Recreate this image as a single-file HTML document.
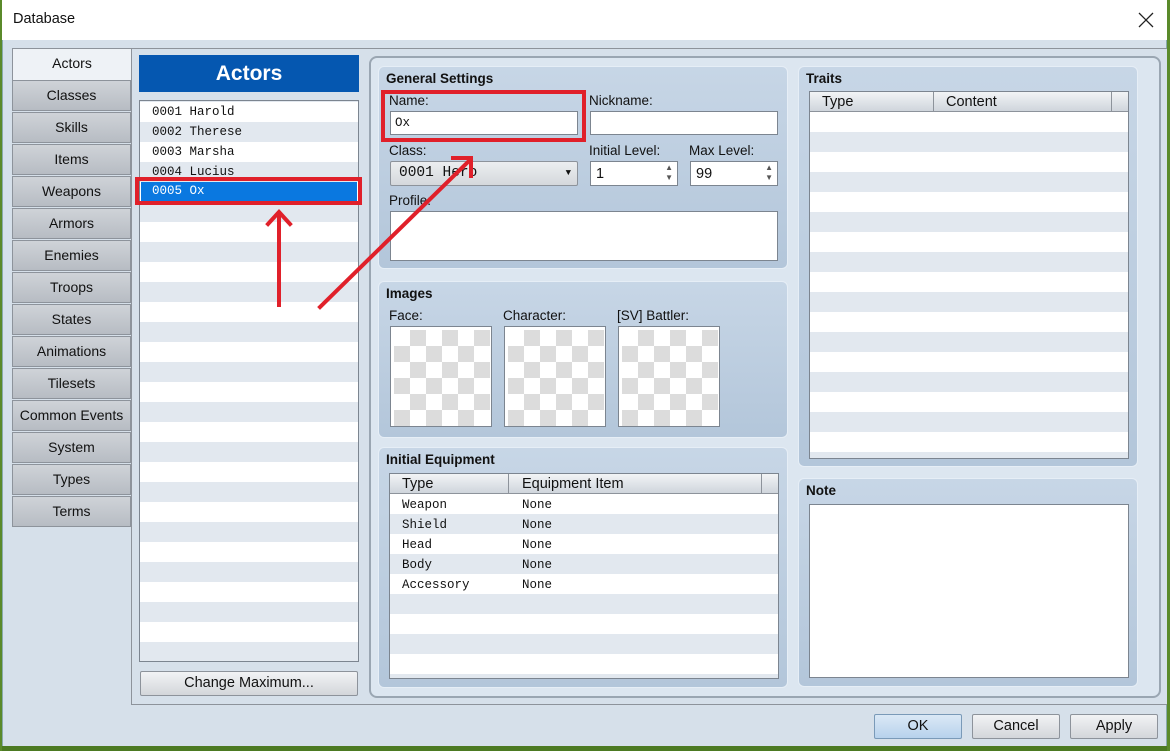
<!DOCTYPE html>
<html><head><meta charset="utf-8"><style>
*{box-sizing:border-box;margin:0;padding:0}
body{width:1170px;height:751px;position:relative;overflow:hidden;background:#5a8a2a;font-family:"Liberation Sans",sans-serif;font-size:13px;color:#111}
.a{position:absolute}
.win{left:2px;top:0;width:1165px;height:748px;background:#d6e0ea;border:1px solid #8aa}
.title{left:2px;top:0;width:1165px;height:40px;background:#fff}
.tab{position:absolute;left:12px;width:119px;height:31px;background:linear-gradient(#cfd3d8,#b7bcc3);border:1px solid #8d939b;text-align:center;line-height:29px;font-size:14px}
.mono{font-family:"Liberation Mono",monospace;font-size:12.5px}
.stripe{background:repeating-linear-gradient(#fff 0 20px,#e2e8ef 20px 40px)}
.panel{position:absolute;border-radius:6px;background:linear-gradient(#c7d6e6,#b3c6da);border:1px solid #e6eef6}
.ph{position:absolute;left:7px;top:4px;font-weight:bold;font-size:13.5px}
.lbl{position:absolute;font-size:13.5px}
.inp{position:absolute;background:#fff;border:1px solid #7c8590}
.chk{position:absolute;width:102px;height:101px;border:1px solid #7c8590;background:#fff;padding:3px}
.chk div{width:96px;height:96px;background:repeating-conic-gradient(#dcdcdc 0 25%,#fff 0 50%) 0 0/32px 32px}
.hdr{position:absolute;height:20px;background:linear-gradient(#f2f4f6,#cfd5dc);border-bottom:1px solid #8d939b;font-size:14.5px;line-height:20px}
.btn{position:absolute;height:25px;border:1px solid #8d939b;border-radius:2px;background:linear-gradient(#f2f3f5,#d3d6da);text-align:center;line-height:23px;font-size:14.5px}
.red{position:absolute;border:4px solid #e0202a}
</style></head><body>
<div class="a win"></div>
<div class="a title"></div>
<div class="a" style="left:13px;top:11px;font-size:14.5px">Database</div>
<svg class="a" style="left:1138px;top:12px" width="16" height="16"><path d="M1 1L15 15M15 1L1 15" stroke="#222" stroke-width="1.3"/></svg>
<div class="a" style="left:2px;top:746px;width:1165px;height:5px;background:#4c7a22"></div>

<div class="tab" style="top:48px;background:#eef2f6;height:33px;border-right:none">Actors</div>
<div class="tab" style="top:80px">Classes</div>
<div class="tab" style="top:112px">Skills</div>
<div class="tab" style="top:144px">Items</div>
<div class="tab" style="top:176px">Weapons</div>
<div class="tab" style="top:208px">Armors</div>
<div class="tab" style="top:240px">Enemies</div>
<div class="tab" style="top:272px">Troops</div>
<div class="tab" style="top:304px">States</div>
<div class="tab" style="top:336px">Animations</div>
<div class="tab" style="top:368px">Tilesets</div>
<div class="tab" style="top:400px">Common Events</div>
<div class="tab" style="top:432px">System</div>
<div class="tab" style="top:464px">Types</div>
<div class="tab" style="top:496px">Terms</div>

<div class="a" style="left:131px;top:48px;width:1036px;height:657px;border:1px solid #8d939b;border-right:none;background:#d6e0ea"></div>

<div class="a" style="left:139px;top:55px;width:220px;height:37px;background:#0557b0;color:#fff;font-weight:bold;font-size:21px;text-align:center;line-height:37px">Actors</div>
<div class="a stripe" style="left:139px;top:100px;width:220px;height:562px;border:1px solid #7c8590;background-position:0 1px"></div>
<div class="a mono" style="left:152px;top:102px;line-height:20px">0001 Harold<br>0002 Therese<br>0003 Marsha<br>0004 Lucius</div>
<div class="a mono" style="left:141px;top:182px;width:216px;height:19px;background:#0a78e0;color:#fff;padding-left:11px;line-height:19px">0005 Ox</div>
<div class="btn" style="left:140px;top:671px;width:218px">Change Maximum...</div>

<div class="a" style="left:369px;top:56px;width:792px;height:642px;border:2px solid #9aa6b2;border-radius:8px;background:#dce6f0"></div>

<div class="panel" style="left:378px;top:66px;width:410px;height:203px"><div class="ph">General Settings</div></div>
<div class="lbl" style="left:389px;top:93px">Name:</div>
<div class="inp mono" style="left:390px;top:111px;width:188px;height:24px;padding:4px 4px">Ox</div>
<div class="lbl" style="left:589px;top:93px">Nickname:</div>
<div class="inp" style="left:590px;top:111px;width:188px;height:24px"></div>
<div class="lbl" style="left:389px;top:143px">Class:</div>
<div class="btn mono" style="left:390px;top:161px;width:188px;text-align:left;padding-left:8px;background:linear-gradient(#eceef0,#d5d8dc)">0001 Hero<span style="position:absolute;right:6px;font-size:9px">▼</span></div>
<div class="lbl" style="left:589px;top:143px">Initial Level:</div>
<div class="inp" style="left:590px;top:161px;width:88px;height:25px;padding:4px 5px;font-size:14.5px">1<span style="position:absolute;right:4px;top:1px;font-size:8px;line-height:10px;color:#555">▲<br>▼</span></div>
<div class="lbl" style="left:689px;top:143px">Max Level:</div>
<div class="inp" style="left:690px;top:161px;width:88px;height:25px;padding:4px 5px;font-size:14.5px">99<span style="position:absolute;right:4px;top:1px;font-size:8px;line-height:10px;color:#555">▲<br>▼</span></div>
<div class="lbl" style="left:389px;top:193px">Profile:</div>
<div class="inp" style="left:390px;top:211px;width:388px;height:50px"></div>

<div class="panel" style="left:378px;top:281px;width:410px;height:157px"><div class="ph">Images</div></div>
<div class="lbl" style="left:389px;top:308px">Face:</div>
<div class="lbl" style="left:503px;top:308px">Character:</div>
<div class="lbl" style="left:617px;top:308px">[SV] Battler:</div>
<div class="chk" style="left:390px;top:326px"><div></div></div>
<div class="chk" style="left:504px;top:326px"><div></div></div>
<div class="chk" style="left:618px;top:326px"><div></div></div>

<div class="panel" style="left:378px;top:447px;width:410px;height:241px"><div class="ph">Initial Equipment</div></div>
<div class="a stripe" style="left:389px;top:473px;width:390px;height:206px;border:1px solid #7c8590;background-position:0 20px"></div>
<div class="hdr" style="left:390px;top:474px;width:388px"><span style="position:absolute;left:12px">Type</span><span style="position:absolute;left:118px;height:20px;border-left:1px solid #8d939b"></span><span style="position:absolute;left:132px">Equipment Item</span><span style="position:absolute;left:371px;height:20px;border-left:1px solid #8d939b"></span></div>
<div class="a mono" style="left:402px;top:495px;line-height:20px">Weapon<br>Shield<br>Head<br>Body<br>Accessory</div>
<div class="a mono" style="left:522px;top:495px;line-height:20px">None<br>None<br>None<br>None<br>None</div>

<div class="panel" style="left:798px;top:66px;width:340px;height:401px"><div class="ph">Traits</div></div>
<div class="a stripe" style="left:809px;top:91px;width:320px;height:368px;border:1px solid #7c8590;background-position:0 20px"></div>
<div class="hdr" style="left:810px;top:92px;width:318px"><span style="position:absolute;left:12px">Type</span><span style="position:absolute;left:123px;height:20px;border-left:1px solid #8d939b"></span><span style="position:absolute;left:136px">Content</span><span style="position:absolute;left:301px;height:20px;border-left:1px solid #8d939b"></span></div>

<div class="panel" style="left:798px;top:478px;width:340px;height:209px"><div class="ph">Note</div></div>
<div class="inp" style="left:809px;top:504px;width:320px;height:174px"></div>

<div class="btn" style="left:874px;top:714px;width:88px;background:linear-gradient(#dbe9f6,#b7d2ec);border-color:#7a9ab8">OK</div>
<div class="btn" style="left:972px;top:714px;width:88px">Cancel</div>
<div class="btn" style="left:1070px;top:714px;width:88px">Apply</div>

<div class="red" style="left:135px;top:177px;width:227px;height:28px"></div>
<div class="red" style="left:381px;top:90px;width:205px;height:52px"></div>
<svg class="a" style="left:0;top:0" width="1170" height="751">
<g stroke="#e0202a" stroke-width="4" fill="none" stroke-linecap="square">
<path d="M279 305 L279 213"/><path d="M268 224 L279 212 L290 224"/>
<path d="M320 307 L470 160"/><path d="M453 158 L471 158 L471 176"/>
</g></svg>
</body></html>
